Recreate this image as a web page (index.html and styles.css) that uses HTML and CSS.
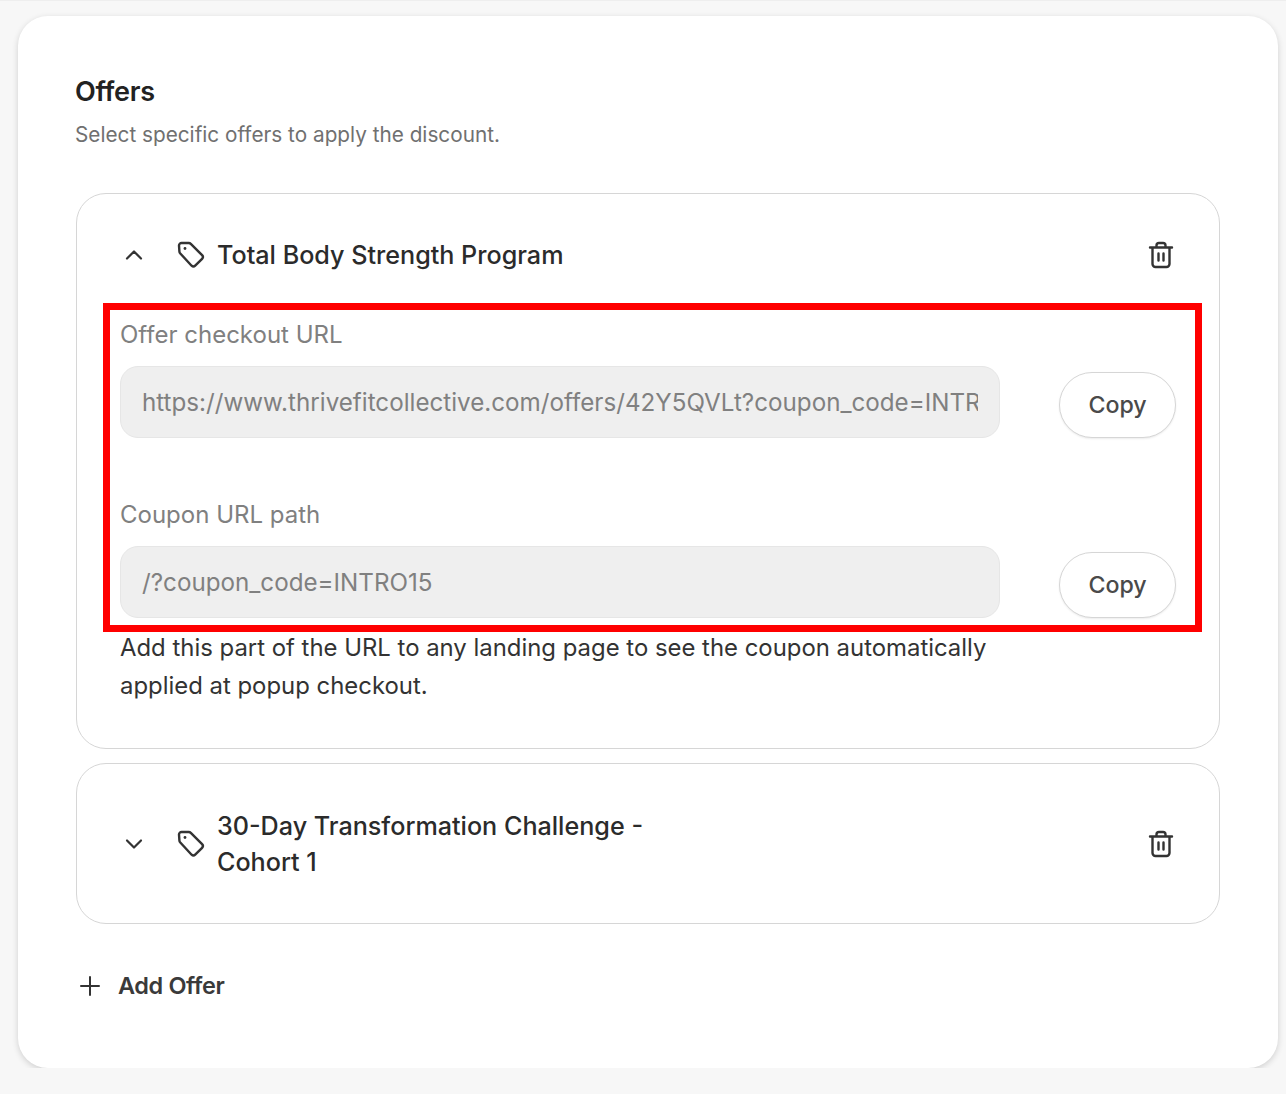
FILE: index.html
```html
<!DOCTYPE html>
<html lang="en">
<head>
  <meta charset="UTF-8">
  <title>Offers</title>
  <link rel="stylesheet" href="styles.css">
</head>
<body>

  <main class="panel">
    <h2 class="panel-title">Offers</h2>
    <p class="panel-sub">Select specific offers to apply the discount.</p>

    <section class="offer offer-open">
      <div class="offer-head offer-head-open">
        <svg class="chevron" width="20" height="12" viewBox="0 0 20 12"><path d="M3 9.500 10 2.500 17 9.500"/></svg>
        <svg class="tag" width="30" height="30" viewBox="0 0 30 30"><path d="M3 5.500A2.500 2.500 0 0 1 5.500 3h7.200a3 3 0 0 1 2.100.9l11.300 11.300a2.600 2.600 0 0 1 0 3.600l-6.900 6.900a2.600 2.600 0 0 1-3.600 0L4.300 13.500a3 3 0 0 1-.9-2.100z"/><circle class="tag-dot" cx="9" cy="8.500" r="1.400"/></svg>
        <span class="offer-name">Total Body Strength Program</span>
        <svg class="trash" width="26" height="28" viewBox="0 0 26 28"><path d="M2 6.500h22M8.500 6.500V4.500A2.500 2.500 0 0 1 11 2h4a2.500 2.500 0 0 1 2.500 2.500v2M4.500 6.500V23a3 3 0 0 0 3 3h11a3 3 0 0 0 3-3V6.500M10.500 12.500v7M15.500 12.500v7"/></svg>
      </div>

      <div class="highlight">
        <div class="field">
          <label class="field-label">Offer checkout URL</label>
          <div class="field-row">
            <input class="field-input" readonly value="https://www.thrivefitcollective.com/offers/42Y5QVLt?coupon_code=INTRO15">
            <button class="copy-btn">Copy</button>
          </div>
        </div>
        <div class="field">
          <label class="field-label">Coupon URL path</label>
          <div class="field-row">
            <input class="field-input" readonly value="/?coupon_code=INTRO15">
            <button class="copy-btn">Copy</button>
          </div>
        </div>
      </div>

      <p class="field-note">Add this part of the URL to any landing page to see the coupon automatically applied at popup checkout.</p>
    </section>

    <section class="offer">
      <div class="offer-head offer-head-tall">
        <svg class="chevron" width="20" height="12" viewBox="0 0 20 12"><path d="M3 2.500 10 9.500 17 2.500"/></svg>
        <svg class="tag" width="30" height="30" viewBox="0 0 30 30"><path d="M3 5.500A2.500 2.500 0 0 1 5.500 3h7.200a3 3 0 0 1 2.100.9l11.300 11.300a2.600 2.600 0 0 1 0 3.600l-6.900 6.900a2.600 2.600 0 0 1-3.600 0L4.300 13.500a3 3 0 0 1-.9-2.100z"/><circle class="tag-dot" cx="9" cy="8.500" r="1.400"/></svg>
        <span class="offer-name offer-name-wrap">30-Day Transformation Challenge - Cohort 1</span>
        <svg class="trash" width="26" height="28" viewBox="0 0 26 28"><path d="M2 6.500h22M8.500 6.500V4.500A2.500 2.500 0 0 1 11 2h4a2.500 2.500 0 0 1 2.500 2.500v2M4.500 6.500V23a3 3 0 0 0 3 3h11a3 3 0 0 0 3-3V6.500M10.500 12.500v7M15.500 12.500v7"/></svg>
      </div>
    </section>

    <button class="add-btn">
      <svg width="20" height="20" viewBox="0 0 20 20"><path d="M10 1v18M1 10h18"/></svg>
      Add Offer
    </button>
  </main>

</body>
</html>
```

FILE: styles.css
```css
* { box-sizing: border-box; }
body { margin: 0; padding: 15px 8px 0 18px; background: #f7f7f7; border-top: 1px solid #eee; font-family: Inter, sans-serif; color: #2b2b2b; }
svg { fill: none; stroke: #333; stroke-linecap: round; stroke-linejoin: round; flex: none; }

.panel { height: 1052px; padding: 60px 58px 0; background: #fff; border-radius: 30px; box-shadow: 0 2px 6px rgba(0,0,0,.16); }
.panel-title { margin: 0 0 0 -1px; font-size: 27px; line-height: 32px; font-weight: 600; color: #222; letter-spacing: -.3px; }
.panel-sub { margin: 13px 0 0 -1px; font-size: 20.750px; line-height: 28px; color: #707070; }

.offer { margin-top: 14px; border: 1px solid #d6d6d6; border-radius: 30px; }
.offer-open { margin-top: 44px; height: 556px; }
.offer-head { display: flex; align-items: center; height: 109px; padding: 0 45px 0 47px; }
.offer-head-open { padding-top: 12px; }
.offer-head-tall { height: 159px; }
.offer-name { flex: 1; margin-left: 11px; font-size: 25.150px; line-height: 36px; font-weight: 500; color: #2b2b2b; }
.offer-name-wrap { padding-right: 490px; }
.chevron { stroke-width: 2.2; margin-right: 32px; }
.tag { stroke-width: 2.4; }
.tag-dot { fill: #333; stroke: none; }
.trash { stroke-width: 2.400; }

.highlight { margin: 0 17px 0 26px; height: 329px; padding: 6px 19px 0 10px; border: 7px solid #f00; }
.field { height: 180px; }
.field-label { display: block; padding-top: 1px; font-size: 24px; line-height: 36px; color: #808080; }
.field-row { display: flex; align-items: flex-end; margin-top: 13px; }
.field-input { width: 880px; height: 72px; padding: 0 21px; background: #efefef; border: 1px solid #e6e6e6; border-radius: 18px; font: 24.200px Inter, sans-serif; color: #808080; outline: none; }
.copy-btn { width: 117px; height: 66px; margin-left: 59px; background: #fff; border: 1px solid #d6d6d6; border-radius: 33px; font: 500 23.200px Inter, sans-serif; color: #4a4a4a; box-shadow: 0 1px 2px rgba(0,0,0,.08); }

.field-note { margin: -3px 0 0 43px; width: 880px; font-size: 23.900px; line-height: 38px; color: #333; }

.add-btn { display: flex; align-items: center; gap: 18px; margin-top: 47px; padding: 0 0 0 4px; background: none; border: 0; font: 600 23.500px Inter, sans-serif; color: #3a3a3a; letter-spacing: -.4px; }
.add-btn svg { stroke-width: 2; }
```
